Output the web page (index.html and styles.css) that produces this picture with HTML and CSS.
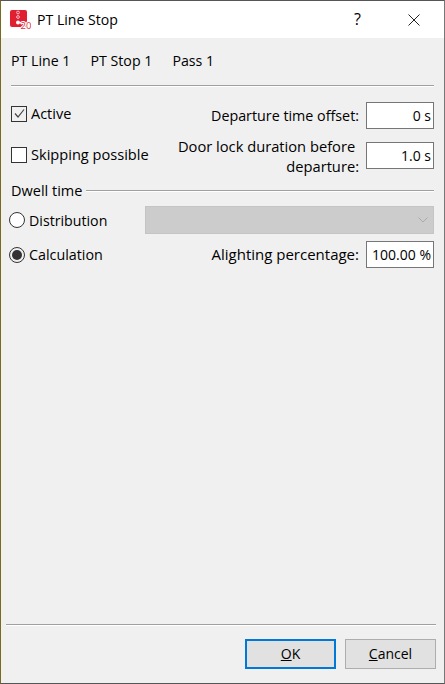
FILE: index.html
```html
<!DOCTYPE html>
<html>
<head>
    <meta charset="utf-8"/>
    <title>PT Line Stop</title>
    <link rel="stylesheet" href="styles.css">
</head>
<body>
<div class="dialog">
    <div class="titleBar">
        <svg class="appIcon" width="21" height="20" viewBox="0 0 21 20">
            <rect x="0" y="0" width="17" height="17" rx="2" fill="#e02030"/>
            <circle cx="8" cy="2.5" r="1.4" fill="none" stroke="#fbc" stroke-width="1"/>
            <circle cx="8" cy="7" r="1.4" fill="none" stroke="#fbc" stroke-width="1"/>
            <circle cx="8" cy="12.5" r="2" fill="#fff"/>
            <text x="10.5" y="18.5" class="appIconText">20</text>
        </svg>
        <span class="titleText">PT Line Stop</span>
        <span class="helpBtn">?</span>
        <svg class="closeBtn" width="12" height="12" viewBox="0 0 12 12">
            <path d="M0.5 0.5 L11.5 11.5 M11.5 0.5 L0.5 11.5" stroke="#222" stroke-width="1" fill="none"/>
        </svg>
    </div>

    <div class="content">
        <div class="breadcrumb">
            <span>PT Line 1</span>
            <span>PT Stop 1</span>
            <span>Pass 1</span>
        </div>
        <div class="hline"></div>

        <div class="formRow rowActive">
            <span class="check">
                <svg width="13" height="13" viewBox="0 0 13 13">
                    <path d="M2 6.5 L5 10 L11 2.5" stroke="#444" stroke-width="1.2" fill="none"/>
                </svg>
            </span>
            <span class="checkLabel">Active</span>
            <span class="rightLabel offsetLabel">Departure time offset:</span>
            <span class="field">0 s</span>
        </div>
        <div class="formRow rowSkip">
            <span class="check"></span>
            <span class="checkLabel skipLabel">Skipping possible</span>
            <span class="rightLabel twoLine">Door lock duration before&nbsp;<br/>departure:</span>
            <span class="field">1.0 s</span>
        </div>

        <div class="groupTitle">
            <span>Dwell time</span>
            <div class="groupLine"></div>
        </div>

        <div class="formRow rowDist">
            <span class="radio"></span>
            <span class="radioLabel distLabel">Distribution</span>
            <div class="combo">
                <svg width="10" height="6" viewBox="0 0 10 6">
                    <path d="M0.5 0.5 L5 5 L9.5 0.5" stroke="#aaa" stroke-width="1" fill="none"/>
                </svg>
            </div>
        </div>
        <div class="formRow rowCalc">
            <span class="radio on"><span class="radioDot"></span></span>
            <span class="radioLabel calcLabel">Calculation</span>
            <span class="rightLabel alightLabel">Alighting percentage:</span>
            <span class="field">100.00 %</span>
        </div>
    </div>

    <div class="footer">
        <div class="hline"></div>
        <div class="buttons">
            <span class="btn btnDefault"><u>O</u>K</span>
            <span class="btn"><u>C</u>ancel</span>
        </div>
    </div>
</div>
</body>
</html>
```
FILE: styles.css
```css
* {
    margin: 0;
    padding: 0;
    box-sizing: border-box;
}

html, body {
    height: 100%;
}

body {
    font: 14.5px/19px "Open Sans", "Noto Sans", sans-serif;
    color: #000;
    overflow: hidden;
}

.dialog {
    height: 684px;
    display: flex;
    flex-direction: column;
    background: #f0f0f0;
    border-top: 1px solid #555;
    border-left: 1px solid #7a6a20;
    border-right: 1px solid #777;
    border-bottom: 1px solid #555;
}

.titleBar {
    height: 37px;
    flex: none;
    display: flex;
    align-items: center;
    background: #fff;
    padding-left: 9px;
}

.appIcon {
    margin-right: 6px;
}

.appIconText {
    font: 9.5px "Open Sans", sans-serif;
    fill: #d8303f;
    stroke: #fff;
    stroke-width: 2px;
    paint-order: stroke;
}

.titleText {
    flex: 1;
    font-size: 14.1px;
}

.helpBtn {
    font-size: 16px;
    margin-right: 47px;
}

.closeBtn {
    margin-right: 24px;
}

.content {
    flex: 1;
    padding: 0 10px;
}

.breadcrumb {
    display: flex;
    gap: 20px;
    padding-top: 13px;
    height: 47px;
    font-size: 14.2px;
}

.hline {
    height: 2px;
    border-top: 1px solid #a0a0a0;
    border-bottom: 1px solid #fff;
}

.formRow {
    display: flex;
    align-items: center;
}

.rowActive {
    height: 27px;
    margin-top: 15px;
}

.rowActive .check, .rowActive .checkLabel {
    margin-bottom: 4px;
}

.rowSkip {
    height: 27px;
    margin-top: 13px;
}

.rowSkip .check, .rowSkip .checkLabel {
    margin-bottom: 2px;
}

.rowDist {
    height: 28px;
    margin-top: 6px;
}

.rowCalc {
    height: 27px;
    margin-top: 7px;
}

.check {
    width: 16px;
    height: 16px;
    flex: none;
    border: 1px solid #333;
    background: #fff;
    display: flex;
    align-items: center;
    justify-content: center;
}

.rowActive .check {
    background: #f0f0f0;
}

.checkLabel {
    margin-left: 4px;
}

.skipLabel {
    font-size: 14.6px;
}

.rightLabel {
    margin-left: auto;
    margin-right: 7px;
    text-align: right;
}

.offsetLabel {
    font-size: 14.3px;
}

.alightLabel {
    font-size: 15px;
}

.twoLine {
    line-height: 20px;
    font-size: 14.7px;
}

.field {
    width: 68px;
    height: 27px;
    flex: none;
    border: 1px solid #767676;
    background: #fff;
    text-align: right;
    padding: 3px 2px 0 0;
    font-size: 14px;
}

.groupTitle {
    display: flex;
    align-items: center;
    margin-top: 12px;
    height: 19px;
}

.groupLine {
    flex: 1;
    height: 2px;
    margin-left: 4px;
    border-top: 1px solid #a0a0a0;
    border-bottom: 1px solid #fff;
}

.radio {
    width: 16px;
    height: 16px;
    flex: none;
    margin-left: -2px;
    border: 1px solid #333;
    border-radius: 50%;
    background: #fff;
    display: flex;
    align-items: center;
    justify-content: center;
}

.radio.on {
    background: #f0f0f0;
}

.radioDot {
    width: 10px;
    height: 10px;
    border-radius: 50%;
    background: #333;
}

.radioLabel {
    margin-left: 4px;
}

.distLabel {
    width: 116px;
    font-size: 14.2px;
}

.calcLabel {
    font-size: 14.3px;
}

.combo {
    flex: 1;
    height: 28px;
    background: #cccccc;
    border: 1px solid #c4c4c4;
    display: flex;
    align-items: center;
    justify-content: flex-end;
    padding-right: 5px;
}

.footer {
    flex: none;
    padding: 0 8px 0 5px;
}

.buttons {
    display: flex;
    justify-content: flex-end;
    gap: 9px;
    padding-top: 13px;
    height: 57px;
}

.btn {
    width: 91px;
    height: 30px;
    background: #e1e1e1;
    border: 1px solid #adadad;
    text-align: center;
    line-height: 28px;
    font-size: 14px;
}

.btnDefault {
    border: 2px solid #0078d7;
    line-height: 26px;
}
```
